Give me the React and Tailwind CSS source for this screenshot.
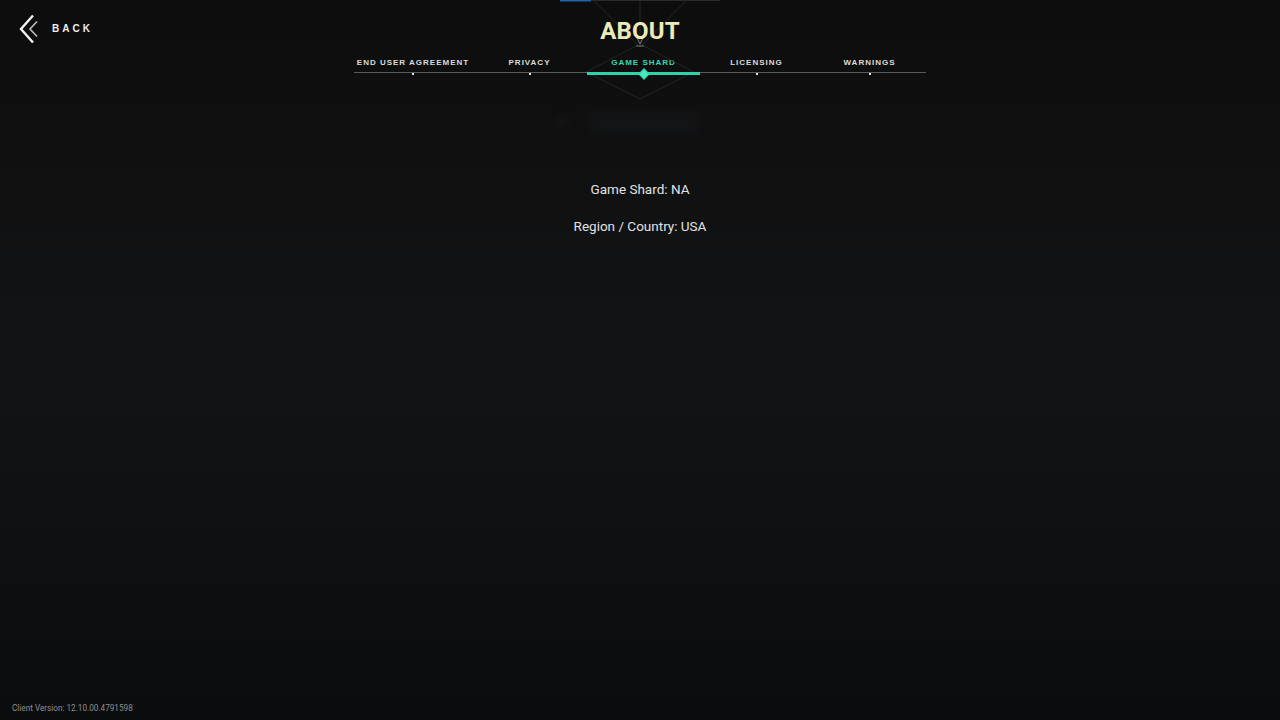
import React from "react";

const tabs = [
  { t: "END USER AGREEMENT", w: "w-[118px]" },
  { t: "PRIVACY", w: "w-[115px]" },
  { t: "GAME SHARD", w: "w-[113px]" },
  { t: "LICENSING", w: "w-[113px]" },
  { t: "WARNINGS", w: "w-[113px]" },
];
const ACTIVE = 2;

export default function App() {
  return (
    <div className="relative w-[1280px] h-[720px] overflow-hidden bg-gradient-to-b from-[#0d0d0e] via-[#131415] to-[#0b0c0d] flex flex-col font-['Roboto','Liberation_Sans',sans-serif]">
      {/* faint background decoration */}
      <svg className="absolute left-0 top-0 pointer-events-none" width="1280" height="110" viewBox="0 0 1280 110">
        <line x1="560" y1="0.5" x2="591" y2="0.5" stroke="#1f63a8" strokeWidth="2" />
        <line x1="591" y1="0.5" x2="720" y2="0.5" stroke="#2a2b2c" strokeWidth="1" />
        <line x1="593" y1="0" x2="640" y2="47" stroke="#232425" strokeWidth="1" />
        <line x1="687" y1="0" x2="640" y2="47" stroke="#232425" strokeWidth="1" />
        <line x1="640" y1="0" x2="640" y2="42" stroke="#2a2b2c" strokeWidth="1" />
        <polygon points="640,44 694,72 640,99 586,72" fill="none" stroke="#222324" strokeWidth="1" />
        <path d="M637 38 L640 44 L643 38 M636 46 L644 46" stroke="#7a7a72" strokeWidth="1" fill="none" />
      </svg>
      <div className="absolute left-[590px] top-[110px] w-[108px] h-[24px] bg-[#171819] blur-[3px] opacity-60" />
      <div className="absolute left-[556px] top-[116px] w-[12px] h-[10px] bg-[#191818] blur-[3px] opacity-60" />

      {/* header */}
      <header className="relative grid grid-cols-[1fr_auto_1fr] items-center h-[55px]">
        <div className="flex items-center pl-[19px] pt-[2px]">
          <svg width="20" height="30" viewBox="0 0 20 30">
            <polyline points="14,1.5 2,15 14,28.5" fill="none" stroke="#f2f2f2" strokeWidth="2.4" strokeLinejoin="miter" />
            <polyline points="18,7.5 11,15 18,22.5" fill="none" stroke="#bdbdbd" strokeWidth="1.6" />
          </svg>
          <span className="ml-[13px] text-[10px] font-bold tracking-[3px] text-[#ececec] font-['Liberation_Sans',sans-serif]">BACK</span>
        </div>
        <h1 className="text-[24px] leading-none font-bold text-[#ecebb8] tracking-[0.2px] pt-[6px] font-['Roboto','Liberation_Sans',sans-serif]">
          ABOUT
        </h1>
        <div />
      </header>

      {/* tabs */}
      <nav className="w-[572px] mx-auto">
        <div className="flex h-[14px] items-center pt-[1px]">
          {tabs.map((tab, i) => (
            <div
              key={tab.t}
              className={
                tab.w +
                " whitespace-nowrap text-center text-[8px] font-bold tracking-[1px] leading-none font-['Liberation_Sans',sans-serif] " +
                (i === ACTIVE ? "text-[#39d9ae]" : "text-[#dcdcdc]")
              }
            >
              {tab.t}
            </div>
          ))}
        </div>
        <div className="relative mt-[3px] h-[1px] bg-[#5b5c5c] flex">
          {tabs.map((tab, i) => (
            <div key={tab.t} className={"relative " + tab.w}>
              {i === ACTIVE ? (
                <>
                  <div className="absolute left-0 right-0 top-[0px] h-[3px] bg-[#2fd3a7]" />
                  <div className="absolute left-1/2 top-[-2px] -ml-[4px] w-[8px] h-[8px] rotate-45 bg-[#49e8c0] border border-[#2fd3a7]" />
                </>
              ) : (
                <div className="absolute left-1/2 top-[1px] -ml-[1px] w-[2px] h-[2px] bg-[#e6e6e6]" />
              )}
            </div>
          ))}
        </div>
      </nav>

      {/* content */}
      <main className="flex flex-col items-center mt-[107px] text-[13.5px] leading-[18px] text-[#e2e2e2] font-['Roboto','Liberation_Sans',sans-serif]">
        <p>Game Shard: NA</p>
        <p className="mt-[19px]">Region / Country: USA</p>
      </main>

      <div className="flex-1" />

      <footer className="pl-[12px] pb-[7px] text-[8.2px] leading-[10px] text-[#8e8e8e] font-['Liberation_Sans_Narrow','Roboto',sans-serif]">
        Client Version: 12.10.00.4791598
      </footer>
    </div>
  );
}
